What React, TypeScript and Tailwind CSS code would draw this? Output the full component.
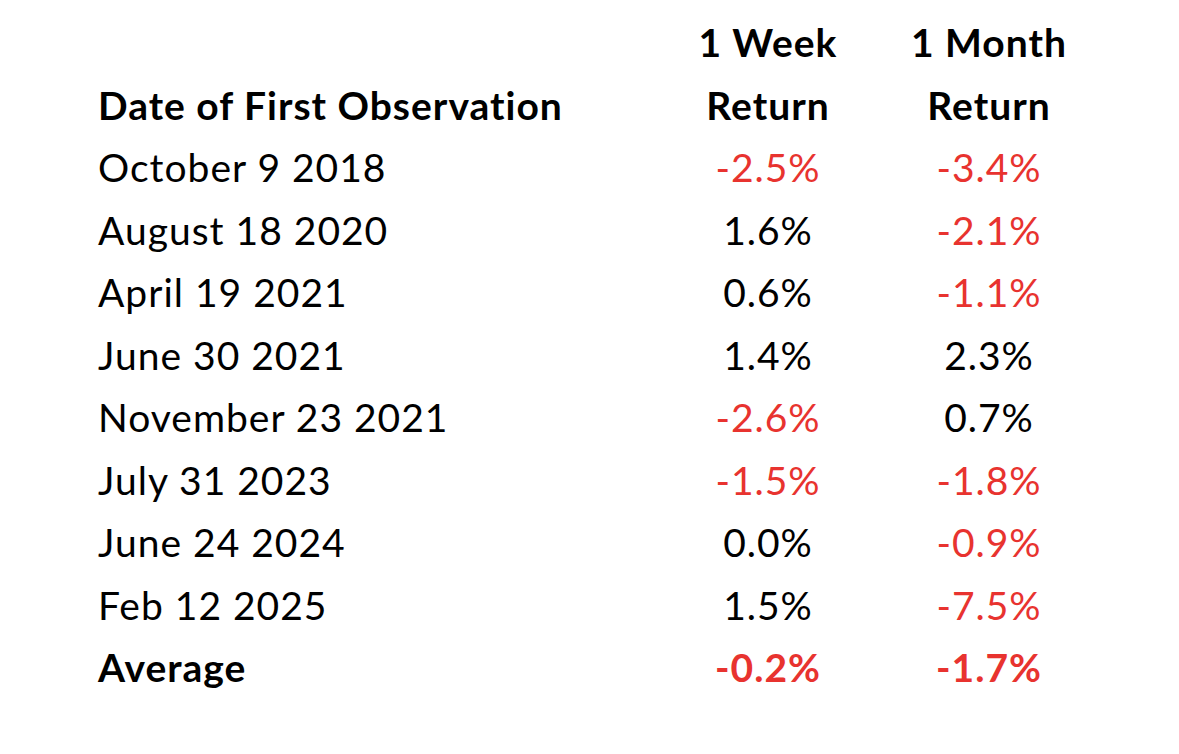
import React from "react";

const rows: [string, string, boolean, string, boolean][] = [
  ["October 9 2018", "-2.5%", true, "-3.4%", true],
  ["August 18 2020", "1.6%", false, "-2.1%", true],
  ["April 19 2021", "0.6%", false, "-1.1%", true],
  ["June 30 2021", "1.4%", false, "2.3%", false],
  ["November 23 2021", "-2.6%", true, "0.7%", false],
  ["July 31 2023", "-1.5%", true, "-1.8%", true],
  ["June 24 2024", "0.0%", false, "-0.9%", true],
  ["Feb 12 2025", "1.5%", false, "-7.5%", true],
];

export default function App() {
  return (
    <div
      className="w-[1179px] h-[754px] bg-white overflow-hidden pt-[11px] pl-[98px] text-[39px] leading-[62.5px] tracking-[1px] text-black"
      style={{ fontFamily: "Lato, 'Open Sans', sans-serif" }}
    >
      <div className="grid grid-cols-[560px_220px_222px]">
        <div className="font-bold"></div>
        <div className="font-bold text-center">1 Week</div>
        <div className="font-bold text-center">1 Month</div>
        <div className="font-bold">Date of First Observation</div>
        <div className="font-bold text-center">Return</div>
        <div className="font-bold text-center">Return</div>
        {rows.map(([d, w, wr, m, mr]) => (
          <React.Fragment key={d}>
            <div>{d}</div>
            <div className={"text-center " + (wr ? "text-[#e8332f]" : "")}>{w}</div>
            <div className={"text-center " + (mr ? "text-[#e8332f]" : "")}>{m}</div>
          </React.Fragment>
        ))}
        <div className="font-bold">Average</div>
        <div className="font-bold text-center text-[#e8332f]">-0.2%</div>
        <div className="font-bold text-center text-[#e8332f]">-1.7%</div>
      </div>
    </div>
  );
}
